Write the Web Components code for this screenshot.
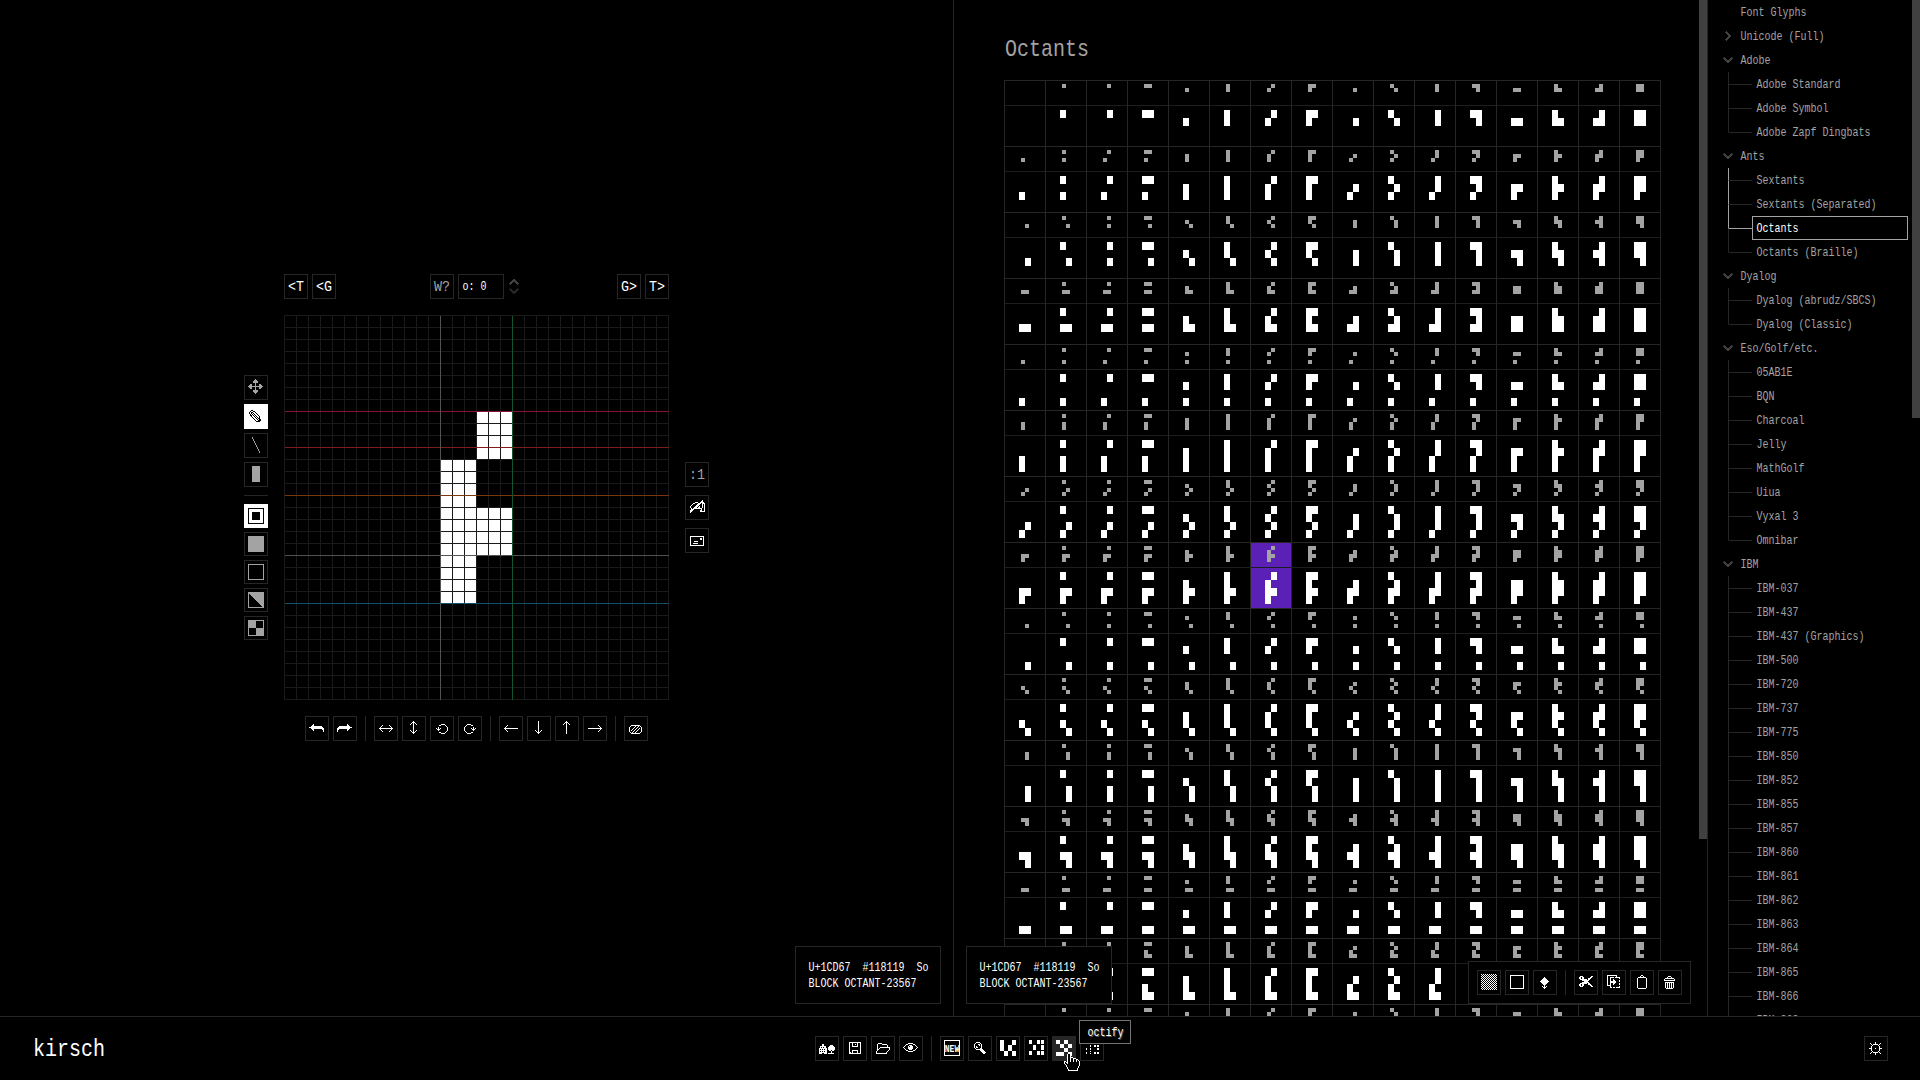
<!DOCTYPE html>
<html lang="en">
<head>
<meta charset="utf-8">
<title>kirsch</title>
<style>
html,body{margin:0;background:#000;overflow:hidden}
body{font-family:"Liberation Mono",monospace;color:#fff}
</style>
</head>
<body>
<kirsch-app></kirsch-app>
<script>
const flipH = r => r.map(s => [...s].reverse().join(''));
const transpose = r => [...r[0]].map((_, i) => r.map(s => s[i]).join(''));
const undo = ['....#..........','...##..........','..###########..','##############.','..#############','...##........##','....#.........#','..............#'];
const arrowL = ['...#..........','..#...........','.#............','##############','.#............','..#...........','...#..........'];
const arrowR = flipH(arrowL);
const arrowLR = ['...#......#...','..#........#..','.#..........#.','##############','.#..........#.','..#........#..','...#......#...'];
const ccw = ['.....####...','...##....#..','..........#.','..#........#','#.#.#......#','.###.......#','..#........#','..........#.','...##....#..','.....####...'];
const chevUp = ['....##....','...####...','..######..','.###..###.','###....###','.#......#.'];
const block = (w, h) => Array(h).fill('#'.repeat(w));
const frame = (w, h) => ['#'.repeat(w), ...Array(h - 2).fill('#' + '.'.repeat(w - 2) + '#'), '#'.repeat(w)];
const cells = (rows, w, h) => rows.flatMap(r => Array(h).fill([...r].map(c => c.repeat(w)).join('')));
const gap = n => Array(n).fill('');
// name: [x, y, rows] measured from the outer corner of a button
const ICONS = {
  undo:[4,8,undo], redo:[4,8,flipH(undo)],
  fliph:[5,9,arrowLR], flipv:[8,5,transpose(arrowLR.map(s=>s.slice(0,6)+s.slice(7)))],
  ccw:[6,8,ccw], cw:[6,8,flipH(ccw)],
  left:[5,9,arrowL], right:[5,9,arrowR],
  up:[8,5,transpose(arrowL.map(s=>s.slice(0,13)))], down:[8,5,transpose(arrowR.map(s=>s.slice(1)))],
  clear:[5,9,['..#########..','.#....#..#.#.','#....#..#...#','#...#..#..#.#','#..#..#..#..#','#.#..#..#...#','#...#..#....#','.#.#..#....#.','..#########..']],
  move:[4,4,['.......#.......','......###......','.....#####.....','.....#####.....','.......#.......','..##...#...##..','.###...#...###.','###############','.###...#...###.','..##...#...##..','.......#.......','.....#####.....','.....#####.....','......###......','.......#.......']],
  pencil:[5,6,['..##........','.#..##......','#.##..#.....','#.#.#..#....','.#.#.#..#...','.##.#.#..#..','..#..#.#..#.','...#..#.#.#.','....#..#.##.','.....#..#.##','......#..###','.......####.']],
  line:[8,4,Array.from({length:16},(_,i)=>'.'.repeat(i>>1)+'#')],
  rect:[8,4,block(8,16)],
  both:[4,4,frame(16,16).map((s,y)=>y>=4&&y<12?'#...########...#':s)],
  fill:[4,4,block(16,16)], stroke:[4,4,frame(16,16)],
  diag:[4,4,Array.from({length:16},(_,y)=>Array.from({length:16},(_,x)=>x>=y||x==0||y==15?'#':'.').join(''))],
  check:[4,4,Array.from({length:16},(_,y)=>Array.from({length:16},(_,x)=>(x<8)==(y<8)||x==0||y==15||y==0||x==15?'#':'.').join(''))],
  brush:[5,5,['............#..','...........##..','.....###..####.','...##...###.###','..#....###..#.#','.#....###...#.#','#....###.#..#.#','#...###.##..#.#','.#.#########..#','.###.......#..#','###.......##..#','##........#####','#..............']],
  card:[5,8,['##############','#............#','#.........##.#','#.........##.#','#............#','#...####.....#','#............#','#..#####.....#','#............#','##############']],
  home:[4,8,['...##...........','...##......###..','.######...#####.','.#.#.##..#######','########.#######','#.#.#.##.#######','########..##.##.','#.#.#.##....#...','########....#...','###..###.######.']],
  save:[6,6,['############','#..#....#..#','#..#..#.#..#','#..#....#..#','#..######..#','#..........#','#..........#','#..........#','#..######..#','#..#....#..#','##.#....#..#','############']],
  open:[5,7,['..####........','.#....#####...','.#.........#..','.#.........#..','.#..##########','.#.#.........#','.##..........#','.#..........#.','#..........#..','#.........#...','###########...']],
  eye:[4,7,['.....#####.....','...##.....##...','..#...###...#..','.#...#.###...#.','#....#####....#','.#...#####...#.','..#...###...#..','...##.....##...','.....#####.....']],
  newbox:[4,4,frame(16,16)],
  zoom:[6,6,['..####......','.#....#.....','#...##.#....','#....#.#....','#.#....#....','#.##...#....','.#....##....','..#######...','......####..','.......####.','........####','.........##.']],
  sext:[4,4,[...cells(['#..#'],4,5),...cells(['#.#.'],4,6),...cells(['.#.#'],4,5)]],
  sextsep:[5,4,[...Array(4).fill('###.....###.###'),'',...Array(5).fill('....###.....###'),'',...Array(4).fill('###.....###.###')]],
  oct:[4,4,cells(['#.#.','.#.#','..#.','##.#'],4,4)],
  braille:[6,9,['....#...##.##','....#...##.##','','#...#......##','#...#......##','','....#........','#.......##.##','#...#...##.##']],
  dither:[4,4,Array.from({length:16},(_,y)=>Array.from({length:16},(_,x)=>(x+y)%2?'.':'#').join(''))],
  box:[5,5,frame(14,14)],
  drop:[7,7,['....#....','...###...','..#####..','.#######.','#########','.#######.','..#####..','...###...','....#....','..#.#.#..','...###...','....#....']],
  cut:[5,6,['.###........##','##.##......##.','##.##....###..','.#######.##...','...#######....','.....####.....','...#######....','.#######.##...','##.##....###..','##.##......##.','.###........##']],
  copy:[5,5,['##########...','#........#...','#..####.#####','#..#........#','#..#..#......','#..#..##....#','#..######...#','#..######....','#..#..##....#','#..#..#.....#','####.........','...#........#','...##.##.####']],
  paste:[7,5,['....##....','...#..#...','.########.',...Array(10).fill('#........#'),'.########.']],
  trash:[6,6,['....###....','...#...#...','.#########.','#.........#','###########','...........','.#########.','.#.#.#.#.#.','.#.#.#.#.#.','.#.#.#.#.#.','.#.#.#.#.#.','.#.#.#.#.#.','..#######..']],
  gear:[5,6,['......#......','.#....#....#.','..#.#####.#..','...#.....#...','..#.......#..','..#.......#..','###...#...###','..#.......#..','..#.......#..','...#.....#...','..#.#####.#..','.#....#....#.','......#......']],
  chevup:[0,0,chevUp], chevdown:[0,0,[...chevUp].reverse()],
  chevright:[0,0,transpose(chevUp).map(s=>s.split('').reverse().join(''))],
  hand:[0,0,['....##..........','...#oo#.........','...#oo#.........','...#oo#.........','...#oo###.......','...#oo#oo###....','...#oo#oo#oo##..','...#oo#oo#oo#o#.','##.#oo#oo#oo#oo#','#o##ooooooooooo#','#oo#ooooooooooo#','.#ooooooooooooo#','..#oooooooooooo#','..#ooooooooooo#.','...#oooooooooo#.','...#ooooooooo#..','....#oooooooo#..','....##########..']]
};
const bitmap = (name) => {
  const [ox, oy, rows] = ICONS[name];
  let d = '', k = '', w = 0;
  rows.forEach((r, y) => {
    w = Math.max(w, r.length);
    for (const m of r.matchAll(/#+|o+/g)) {
      const p = `M${ox + m.index} ${oy + y}h${m[0].length}v1h-${m[0].length}z`;
      if (m[0][0] == '#') d += p; else k += p;
    }
  });
  const W = ox + w, H = oy + rows.length;
  return `<svg width="${W}" height="${H}" viewBox="0 0 ${W} ${H}" shape-rendering="crispEdges"><path d="${d}" fill="currentColor"/>${k ? `<path d="${k}" fill="#000"/>` : ''}</svg>`;
};
const define = (name, render) => customElements.define(name, class extends HTMLElement {
  connectedCallback() {
    if (this.shadowRoot) return;
    this.attachShadow({ mode: 'open' }).innerHTML = render(this);
  }
});

define('px-icon', el => `<style>:host{display:block;line-height:0}svg{display:block}</style>${bitmap(el.getAttribute('name'))}`);

// default: 6px advance, m: 8px advance, l: 12px advance, t: tiny icon label
define('px-text', () => `<style>
:host{display:block;white-space:pre;font-size:10px;line-height:16px}
span{display:block;transform:translate(.5px,1.6px) scaleY(1.24)}
:host([size=m]) {font-size:13.33px}
:host([size=m]) span{transform:translateY(1px) scaleY(1.16)}
:host([size=l]){font-size:20px;line-height:32px}
:host([size=l]) span{transform:translate(1px,2px) scaleY(1.24)}
:host([size=t]){font-size:8px;line-height:16px;font-weight:bold}
:host([size=t]) span{transform:translateY(.5px) scaleY(1.35)}
</style><span><slot></slot></span>`);

define('tool-button', el => `<style>
:host{display:block;box-sizing:border-box;position:relative;width:24px;height:25px;border:1px solid #262626;background:#000;color:#fff;flex:none}
:host([square]){height:24px}
:host([dim]){color:#a3a3a3}
:host([on]){background:#fff;color:#000;border-color:#fff}
:host([hover]){background:#262626}
px-icon{position:absolute;left:-1px;top:-1px}
.t{display:flex;justify-content:center;align-items:center;height:100%}
</style>${el.hasAttribute('icon') ? `<px-icon name="${el.getAttribute('icon')}"></px-icon>` : ''}<div class="t"><slot></slot></div>`);

define('tool-group', () => `<style>
:host{display:flex;gap:4px}
:host([vertical]){flex-direction:column}
:host([wide]){gap:8px}
</style><slot></slot>`);
define('tool-sep', () => `<style>
:host{display:block;width:1px;margin:0 4px;background:#262626;flex:none}
:host([horizontal]){width:auto;height:1px;margin:4px 0}
</style>`);

const btns = (list, attr = '') => list.map(n => n == '|' ? '<tool-sep></tool-sep>' : `<tool-button icon="${n}" ${attr}></tool-button>`).join('');

define('pixel-canvas', () => {
  let s = '';
  const N = 32, C = 12;
  const fillRect = (c, r, w, h) => { s += `<rect x="${c*C}" y="${r*C}" width="${w*C}" height="${h*C}" fill="#fff"/>`; };
  fillRect(16, 8, 3, 4); fillRect(13, 12, 3, 12); fillRect(16, 16, 3, 4);
  let d = '';
  for (let i = 0; i <= N; i++) d += `M${i*C} 0h1v385h-1zM0 ${i*C}h385v1h-385z`;
  s += `<path d="${d}" fill="#1a1a1a"/>`;
  const h = (r, c) => { s += `<rect x="1" y="${r*C}" width="384" height="1" fill="${c}"/>`; };
  const v = (r, c) => { s += `<rect x="${r*C}" y="1" width="1" height="384" fill="${c}"/>`; };
  h(8, '#881337'); h(11, '#7f1d1d'); h(15, '#78350f'); h(20, '#525252'); h(24, '#164e63');
  v(13, '#525252'); v(19, '#14532d');
  return `<style>:host{display:block}svg{display:block}</style><svg width="385" height="385" shape-rendering="crispEdges">${s}</svg>`;
});

define('glyph-editor', () => `<style>
:host{display:flex;justify-content:center;align-items:flex-start;box-sizing:border-box;width:954px;height:1016px;border-right:1px solid #262626;padding-top:274px;position:relative}
.grid{display:grid;grid-template-columns:24px 385px 24px;gap:16px;align-items:center}
.top,.mid{display:flex}
.top{justify-content:space-between;grid-column:2}
.left{grid-column:1}
.bottom{grid-column:2;justify-self:center}
.mid{gap:4px;margin-left:-5px;margin-right:-1px}
.num{box-sizing:border-box;width:46px;height:25px;border:1px solid #262626;padding:3px 0 0 3px}
.spin{display:flex;flex-direction:column;gap:3px;padding:5px 0 0 1px;color:#404040}
.spin px-icon+px-icon{color:#262626}
info-box{position:absolute;right:12px;bottom:12px}
</style>
<div class="grid">
 <div class="top">
  <tool-group><tool-button><px-text size="m">&lt;T</px-text></tool-button><tool-button><px-text size="m">&lt;G</px-text></tool-button></tool-group>
  <div class="mid"><tool-button dim><px-text size="m">W?</px-text></tool-button><div class="num"><px-text>o: 0</px-text></div><div class="spin"><px-icon name="chevup"></px-icon><px-icon name="chevdown"></px-icon></div></div>
  <tool-group><tool-button><px-text size="m">G&gt;</px-text></tool-button><tool-button><px-text size="m">T&gt;</px-text></tool-button></tool-group>
 </div>
 <tool-group class="left" vertical>
  <tool-button icon="move" dim></tool-button><tool-button icon="pencil" on></tool-button><tool-button icon="line" dim></tool-button><tool-button icon="rect" dim></tool-button>
  <tool-sep horizontal></tool-sep>
  <tool-button icon="both" on square></tool-button><tool-button icon="fill" dim square></tool-button><tool-button icon="stroke" dim square></tool-button><tool-button icon="diag" dim square></tool-button><tool-button icon="check" dim square></tool-button>
 </tool-group>
 <pixel-canvas></pixel-canvas>
 <tool-group vertical wide><tool-button dim><px-text size="m">:1</px-text></tool-button><tool-button icon="brush"></tool-button><tool-button icon="card"></tool-button></tool-group>
 <tool-group class="bottom">${btns(['undo','redo','|','fliph','flipv','ccw','cw','|','left','down','up','right','|','clear'])}</tool-group>
</div>
<info-box></info-box>`);

define('info-box', () => `<style>
:host{display:block;box-sizing:border-box;width:146px;height:58px;border:1px solid #262626;background:#000;padding:12px}
</style><px-text>U+1CD67  #118119  So</px-text><px-text>BLOCK OCTANT-23567</px-text>`);

define('octant-cell', el => {
  const v = +el.getAttribute('value');
  const draw = (w, h) => {
    let d = '';
    for (let b = 0; b < 8; b++) if (v >> b & 1) d += `M${(b & 1) * w} ${(b >> 1) * h}h${w}v${h}h-${w}z`;
    return `<svg width="${w*2}" height="${h*4}" shape-rendering="crispEdges"><path d="${d}" fill="currentColor"/></svg>`;
  };
  return `<style>
:host{display:block;box-sizing:border-box;height:66px;border:solid #262626;border-width:1px 0 0 1px}
svg{display:block}
div{box-sizing:border-box;display:flex}
.h{height:24px;padding:3px 0 0 16px;color:#a3a3a3}
.g{height:41px;border-top:1px solid #1d1d1d;padding:4px 0 0 14px}
:host([selected]) div{background:#5b21b6;background-clip:padding-box}
</style><div class="h">${draw(4, 4)}</div><div class="g">${draw(6, 8)}</div>`;
});

define('glyph-table', () => {
  let c = '';
  for (let v = 0; v < 240; v++) c += `<octant-cell value="${v}"${v == 118 ? ' selected' : ''}></octant-cell>`;
  return `<style>:host{display:grid;grid-template-columns:repeat(16,41px);width:656px;border-right:1px solid #262626}</style>${c}`;
});

define('glyph-browser', () => `<style>
:host{display:flex;box-sizing:border-box;width:754px;height:1016px;border-right:1px solid #262626;position:relative}
.body{flex:1;overflow:hidden;padding:32px 0 0 50px}
px-text.title{color:#a3a3a3;margin-bottom:16px}
.bar{width:8px;height:839px;background:#404040}
info-box{position:absolute;left:12px;bottom:12px}
.tools{position:absolute;right:16px;bottom:12px;border:1px solid #262626;background:#000;padding:8px}
</style>
<div class="body"><px-text size="l" class="title">Octants</px-text><glyph-table></glyph-table></div>
<div class="bar"></div>
<info-box></info-box>
<tool-group class="tools">${btns(['dither','box','drop','|','cut','copy','paste','trash'])}</tool-group>`);

define('tree-head', el => {
  const icon = el.getAttribute('icon');
  return `<style>
:host{display:flex;align-items:center;height:24px;color:#a3a3a3;padding-left:15px}
i{display:flex;justify-content:center;width:10px;margin-right:7px;color:#404040}
</style><i>${icon ? `<px-icon name="${icon}"></px-icon>` : ''}</i><px-text><slot></slot></px-text>`;
});
define('tree-item', () => `<style>
:host{display:grid;grid-template-columns:24px 1fr;height:24px;margin:0 4px 0 20px;color:#a3a3a3}
.v{display:grid;grid-template-rows:12px 12px}
.a{border-left:1px solid var(--a,#262626)}
.b{border:solid #262626;border-width:1px 0 0 1px;border-left-color:var(--b,#262626);border-top-color:var(--h,#262626)}
:host([path]){--a:#a3a3a3;--b:#a3a3a3}
:host([selected]){--a:#a3a3a3;--h:#a3a3a3;color:#fff}
:host([last]) .b{border-left-color:transparent}
.l{box-sizing:border-box;border:1px solid transparent;padding:3px 0 0 3px;height:24px}
:host([selected]) .l{border-color:#a3a3a3}
</style><div class="v"><div class="a"></div><div class="b"></div></div><div class="l"><px-text><slot></slot></px-text></div>`);

const TREE = [
  ['Adobe', ['Adobe Standard','Adobe Symbol','Adobe Zapf Dingbats']],
  ['Ants', ['Sextants','Sextants (Separated)','Octants','Octants (Braille)']],
  ['Dyalog', ['Dyalog (abrudz/SBCS)','Dyalog (Classic)']],
  ['Eso/Golf/etc.', ['05AB1E','BQN','Charcoal','Jelly','MathGolf','Uiua','Vyxal 3','Omnibar']],
  ['IBM', ['IBM-037','IBM-437','IBM-437 (Graphics)','IBM-500','IBM-720','IBM-737','IBM-775','IBM-850','IBM-852','IBM-855','IBM-857','IBM-860','IBM-861','IBM-862','IBM-863','IBM-864','IBM-865','IBM-866','IBM-868']]
];
define('block-sidebar', () => `<style>
:host{display:flex;width:212px;height:1016px;overflow:hidden}
.list{flex:1}
.bar{width:8px;height:418px;background:#404040}
</style><div class="list"><tree-head>Font Glyphs</tree-head><tree-head icon="chevright">Unicode (Full)</tree-head>${
  TREE.map(([h, kids]) => `<tree-head icon="chevdown">${h}</tree-head>` + kids.map((k, i) => {
    const sel = kids.indexOf('Octants');
    return `<tree-item${i < sel ? ' path' : ''}${i == sel ? ' selected' : ''}${i == kids.length - 1 ? ' last' : ''}>${k}</tree-item>`;
  }).join('')).join('')
}</div><div class="bar"></div>`);

define('app-footer', () => `<style>
:host{display:grid;grid-template-columns:1fr 289px 1fr;box-sizing:border-box;height:64px;border-top:1px solid #262626;padding:19px 32px 0;align-items:start;background:#000}
.logo{margin-top:-4px}
.set{margin-left:-.5px}
.end{justify-self:end}
.hot{position:relative}
.tip{position:absolute;left:27px;top:-16px;box-sizing:border-box;width:52px;height:24px;border:1px solid #737373;background:#000;padding:3px 0 0 7px;z-index:2;text-shadow:1px 1px #525252}
.hand{position:absolute;left:12px;top:17px;z-index:3}
</style>
<px-text size="l" class="logo">kirsch</px-text>
<tool-group class="set">${btns(['home','save','open','eye','|'])}<tool-button icon="newbox"><px-text size="t">NEW</px-text></tool-button>${btns(['zoom','sext','sextsep'])}<div class="hot"><tool-button icon="oct" hover></tool-button><div class="tip"><px-text>octify</px-text></div><px-icon class="hand" name="hand"></px-icon></div>${btns(['braille'])}</tool-group>
<tool-button class="end" icon="gear"></tool-button>`);

define('kirsch-app', () => `<style>
:host{display:block;width:1920px;height:1080px;background:#000;overflow:hidden}
main{display:flex;height:1016px}
</style><main><glyph-editor></glyph-editor><glyph-browser></glyph-browser><block-sidebar></block-sidebar></main><app-footer></app-footer>`);
</script>
</body>
</html>
